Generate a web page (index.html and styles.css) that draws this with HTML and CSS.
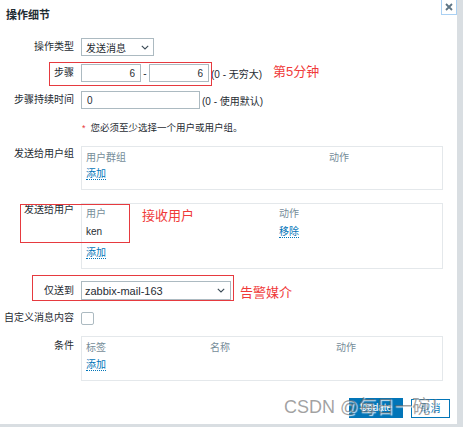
FILE: index.html
```html
<!DOCTYPE html>
<html lang="zh-CN">
<head>
<meta charset="utf-8">
<title>操作细节</title>
<link rel="stylesheet" href="styles.css">
</head>
<body>
<div class="dialog">
  <button class="close" type="button" aria-label="关闭"><svg width="8" height="8" viewBox="0 0 8 8"><path d="M1 1L7 7M7 1L1 7" stroke="#5d7484" stroke-width="1.8"/></svg></button>
  <h2 class="title">操作细节</h2>
  <div class="form">
    <div class="row r1">
      <div class="lbl">操作类型</div>
      <div class="ctl">
        <div class="select s1"><span>发送消息</span><svg class="chev" width="8" height="5" viewBox="0 0 8 5"><path d="M0.8 0.8L4 4L7.2 0.8" fill="none" stroke="#3a4a55" stroke-width="1.1"/></svg></div>
      </div>
    </div>
    <div class="row r2">
      <div class="lbl">步骤</div>
      <div class="ctl">
        <input class="inp num" value="6" readonly><span class="dash">-</span><input class="inp num" value="6" readonly><span class="hint">(0 - 无穷大)</span><span class="note n1">第5分钟</span>
      </div>
      <div class="redbox rb1"></div>
    </div>
    <div class="row r3">
      <div class="lbl">步骤持续时间</div>
      <div class="ctl">
        <input class="inp wide" value="0" readonly><span class="hint h2">(0 - 使用默认)</span>
      </div>
    </div>
    <div class="row r4">
      <div class="lbl"></div>
      <div class="ctl req"><span class="star">*</span>您必须至少选择一个用户或用户组。</div>
    </div>
    <div class="row r5">
      <div class="lbl top">发送给用户组</div>
      <div class="box b5">
        <div class="th">用户群组</div><div class="th">动作</div>
        <div class="add"><span class="link">添加</span></div>
      </div>
    </div>
    <div class="row r6">
      <div class="lbl top">发送给用户</div>
      <div class="box b6">
        <div class="th">用户</div><div class="th">动作</div>
        <div class="td">ken</div><div class="td"><span class="link">移除</span></div>
        <div class="add"><span class="link">添加</span></div>
      </div>
      <div class="redbox rb2"></div>
      <span class="note n2">接收用户</span>
    </div>
    <div class="row r7">
      <div class="lbl">仅送到</div>
      <div class="ctl c7">
        <div class="select s2"><span>zabbix-mail-163</span><svg class="chev" width="8" height="5" viewBox="0 0 8 5"><path d="M0.8 0.8L4 4L7.2 0.8" fill="none" stroke="#3a4a55" stroke-width="1.1"/></svg></div>
        <span class="note n3">告警媒介</span>
      </div>
      <div class="redbox rb3"></div>
    </div>
    <div class="row r8">
      <div class="lbl">自定义消息内容</div>
      <div class="ctl"><span class="check"></span></div>
    </div>
    <div class="row r9">
      <div class="lbl top">条件</div>
      <div class="box b9">
        <div class="th">标签</div><div class="th">名称</div><div class="th">动作</div>
        <div class="add"><span class="link">添加</span></div>
      </div>
    </div>
  </div>
  <div class="actions">
    <button class="btn primary" type="button">Update</button>
    <button class="btn secondary" type="button">取消</button>
  </div>
  <div class="watermark">CSDN @每日一碗！</div>
</div>
</body>
</html>
```
FILE: styles.css
```css
* { box-sizing: border-box; }
html, body { margin: 0; padding: 0; }
body {
  width: 463px;
  height: 427px;
  overflow: hidden;
  background: #d9dee2;
  font-family: "Liberation Sans", "Noto Sans CJK SC", sans-serif;
  font-size: 10px;
  color: #1f2c33;
}
.dialog {
  position: relative;
  width: 457px;
  height: 424px;
  background: #fff;
  padding: 7px 14px 0 0;
}
.close {
  position: absolute;
  top: -1px;
  left: 441px;
  width: 16px;
  height: 16px;
  padding: 0;
  border: 1px solid #a9d0f3;
  background: #fff;
  display: flex;
  align-items: center;
  justify-content: center;
}
.title {
  margin: 0 0 0 6px;
  font-size: 11px;
  font-weight: bold;
  line-height: 16px;
}
.form { display: flex; flex-direction: column; }
.row {
  position: relative;
  display: grid;
  grid-template-columns: 74px 1fr;
  column-gap: 7px;
  align-items: center;
}
.lbl { text-align: right; line-height: 14px; white-space: nowrap; }
.lbl.top { align-self: start; }
.ctl { display: flex; align-items: center; white-space: nowrap; }

.r1 { margin-top: 15px; height: 18px; }
.r2 { margin-top: 8px; height: 18px; }
.r3 { margin-top: 9px; height: 18px; }
.r4 { margin-top: 12px; height: 14px; }
.r5 { margin-top: 11px; align-items: start; }
.r6 { margin-top: 13px; align-items: start; }
.r7 { margin-top: 12px; height: 19px; }
.r8 { margin-top: 11px; height: 13px; }
.r9 { margin-top: 12px; align-items: start; }
.r5 .lbl { padding-top: 1px; }
.r6 .lbl { padding-top: 0; }
.r9 .lbl { padding-top: 3px; }

.select {
  display: flex;
  align-items: center;
  justify-content: space-between;
  height: 18px;
  border: 1px solid #acbac1;
  padding: 0 4px 0 4px;
  background: #fff;
}
.s1 { width: 73px; }
.s2 { width: 150px; height: 19px; font-size: 11px; padding: 0 5px 0 3px; }

.inp {
  height: 18px;
  border: 1px solid #acbac1;
  font: inherit;
  color: #1f2c33;
  padding: 0 5px;
  margin: 0;
  background: #fff;
  outline: none;
}
.num { width: 60px; text-align: right; }
.wide { width: 119px; text-align: left; }
.dash { width: 8px; text-align: center; }
.hint { margin-left: 2px; }
.h2 { margin-left: 2px; }

.note {
  color: #f03a3a;
  font-size: 13px;
  line-height: 16px;
  white-space: nowrap;
}
.n1 { margin-left: 11px; margin-top: -3px; }
.n2 { position: absolute; left: 142px; top: 5px; }
.c7 { align-items: flex-start; height: 19px; }
.n3 { margin-left: 9px; margin-top: 4px; }

.redbox {
  position: absolute;
  border: 1px solid #e63a3f;
  pointer-events: none;
}
.rb1 { left: 49px; top: -2px; width: 163px; height: 24px; }
.rb2 { left: 20px; top: 1px; width: 110px; height: 39px; }
.rb3 { left: 32px; top: -6px; width: 202px; height: 26px; }

.req { line-height: 14px; font-size: 9.5px; }
.star { color: #e8383d; margin: 0 5px 0 1px; font-size: 9px; }

.box {
  border: 1px solid #e4e8eb;
  display: grid;
  padding: 4px 4px 8px 4px;
  line-height: 14px;
}
.b5 { grid-template-columns: 243px 1fr; row-gap: 2px; }
.b6 { grid-template-columns: 193px 1fr; row-gap: 4px; padding-top: 3px; }
.b9 { grid-template-columns: 124px 126px 1fr; row-gap: 3px; }
.b6 .add { margin-top: 3px; }
.th { color: #768d99; }
.td { color: #1f2c33; }
.add { grid-column: 1 / -1; }
.link {
  color: #0275b8;
  border-bottom: 1px dotted #0275b8;
}

.check {
  display: block;
  width: 13px;
  height: 13px;
  border: 1px solid #acbac1;
  border-radius: 2px;
  background: #fff;
}

.actions {
  display: flex;
  justify-content: flex-end;
  gap: 8px;
  margin-top: 17px;
  margin-right: -7px;
}
.btn {
  height: 20px;
  padding: 0;
  font: inherit;
  font-size: 10px;
  line-height: 18px;
  border: 1px solid #0275b8;
}
.primary { width: 54px; background: #0275b8; color: #fff; }
.secondary { width: 39px; height: 19px; margin-top: 1px; background: #fff; color: #0275b8; }

.watermark {
  position: absolute;
  left: 284px;
  top: 397px;
  font-size: 18px;
  line-height: 20px;
  color: rgba(100, 100, 100, 0.6);
  text-shadow: 1px 1px 1px rgba(255, 255, 255, 0.85);
  white-space: nowrap;
  pointer-events: none;
}
```
